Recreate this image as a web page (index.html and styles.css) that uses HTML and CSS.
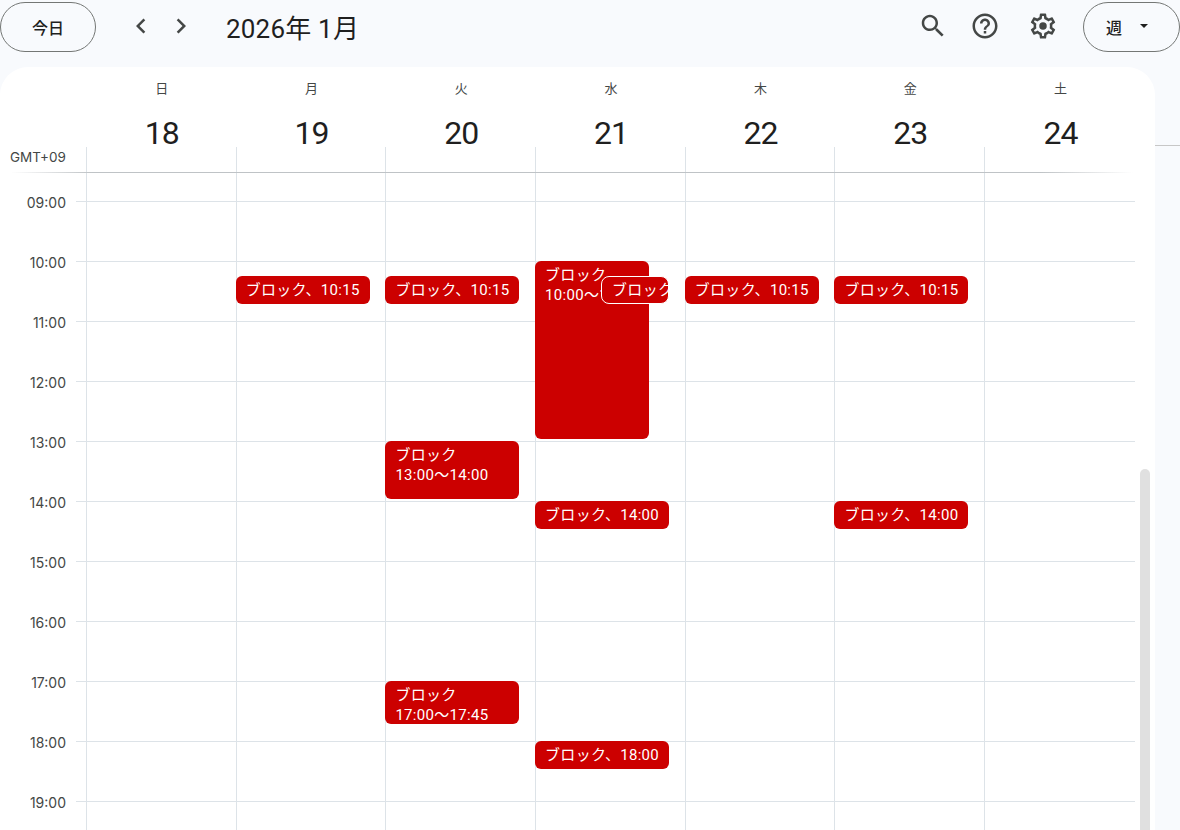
FILE: index.html
```html
<!DOCTYPE html>
<html lang="ja">
<head>
    <meta charset="UTF-8">
    <title>カレンダー</title>
    <link rel="stylesheet" href="styles.css">
</head>
<body>
    <!-- Top bar -->
    <div class="topbar">
        <button class="pill today-btn">今日</button>
        <button class="icon-btn nav-prev">
            <svg viewBox="0 0 24 24"><path d="M15.41 7.41L14 6l-6 6 6 6 1.41-1.41L10.83 12z"/></svg>
        </button>
        <button class="icon-btn nav-next">
            <svg viewBox="0 0 24 24"><path d="M10 6L8.59 7.41 13.17 12l-4.58 4.59L10 18l6-6z"/></svg>
        </button>
        <div class="title">2026年 1月</div>
        <div class="spacer"></div>
        <button class="icon-btn search-btn">
            <svg viewBox="0 0 24 24"><path d="M15.5 14h-.79l-.28-.27C15.41 12.59 16 11.11 16 9.5 16 5.91 13.09 3 9.5 3S3 5.91 3 9.5 5.91 16 9.5 16c1.61 0 3.09-.59 4.23-1.57l.27.28v.79l5 4.99L20.49 19l-4.99-5zm-6 0C7.01 14 5 11.99 5 9.5S7.01 5 9.5 5 14 7.01 14 9.5 11.99 14 9.5 14z"/></svg>
        </button>
        <button class="icon-btn help-btn">
            <svg viewBox="0 0 24 24"><path d="M11 18h2v-2h-2v2zm1-16C6.48 2 2 6.48 2 12s4.48 10 10 10 10-4.48 10-10S17.52 2 12 2zm0 18c-4.41 0-8-3.59-8-8s3.59-8 8-8 8 3.59 8 8-3.59 8-8 8zm0-14c-2.21 0-4 1.79-4 4h2c0-1.1.9-2 2-2s2 .9 2 2c0 2-3 1.75-3 5h2c0-2.25 3-2.5 3-5 0-2.21-1.79-4-4-4z"/></svg>
        </button>
        <button class="icon-btn gear-btn">
            <svg viewBox="0 0 24 24"><path d="M19.43 12.98c.04-.32.07-.64.07-.98 0-.34-.03-.66-.07-.98l2.11-1.65c.19-.15.24-.42.12-.64l-2-3.46c-.09-.16-.26-.25-.44-.25-.06 0-.12.01-.17.03l-2.49 1c-.52-.4-1.08-.73-1.69-.98l-.38-2.65C14.46 2.18 14.25 2 14 2h-4c-.25 0-.46.18-.49.42l-.38 2.65c-.61.25-1.17.59-1.69.98l-2.49-1c-.06-.02-.12-.03-.18-.03-.17 0-.34.09-.43.25l-2 3.46c-.13.22-.07.49.12.64l2.11 1.65c-.04.32-.07.65-.07.98 0 .33.03.66.07.98l-2.11 1.65c-.19.15-.24.42-.12.64l2 3.46c.09.16.26.25.44.25.06 0 .12-.01.17-.03l2.49-1c.52.4 1.08.73 1.69.98l.38 2.65c.03.24.24.42.49.42h4c.25 0 .46-.18.49-.42l.38-2.65c.61-.25 1.17-.59 1.69-.98l2.49 1c.06.02.12.03.18.03.17 0 .34-.09.43-.25l2-3.46c.12-.22.07-.49-.12-.64l-2.11-1.65zm-1.98-1.71c.04.31.05.52.05.73 0 .21-.02.43-.05.73l-.14 1.13.89.7 1.08.84-.7 1.21-1.27-.51-1.04-.42-.9.68c-.43.32-.84.56-1.25.73l-1.06.43-.16 1.13-.2 1.35h-1.4l-.19-1.35-.16-1.13-1.06-.43c-.43-.18-.83-.41-1.23-.71l-.91-.7-1.06.43-1.27.51-.7-1.21 1.08-.84.89-.7-.14-1.13c-.03-.31-.05-.54-.05-.74s.02-.43.05-.73l.14-1.13-.89-.7-1.08-.84.7-1.21 1.27.51 1.04.42.9-.68c.43-.32.84-.56 1.25-.73l1.06-.43.16-1.13.2-1.35h1.39l.19 1.35.16 1.13 1.06.43c.43.18.83.41 1.23.71l.91.7 1.06-.43 1.27-.51.7 1.21-1.07.85-.89.7.14 1.13z"/><circle cx="12" cy="12" r="3"/></svg>
        </button>
        <button class="pill view-btn">週<span class="caret"></span></button>
    </div>

    <div class="main">
        <div class="card">
            <!-- Day headers -->
            <div class="week-head">
                <div></div>
                <div class="day-head"><span class="weekday">日</span><span class="date">18</span></div>
                <div class="day-head"><span class="weekday">月</span><span class="date">19</span></div>
                <div class="day-head"><span class="weekday">火</span><span class="date">20</span></div>
                <div class="day-head"><span class="weekday">水</span><span class="date">21</span></div>
                <div class="day-head"><span class="weekday">木</span><span class="date">22</span></div>
                <div class="day-head"><span class="weekday">金</span><span class="date">23</span></div>
                <div class="day-head"><span class="weekday">土</span><span class="date">24</span></div>
            </div>

            <!-- All day row -->
            <div class="allday">
                <div class="tz">GMT+09</div>
                <div class="allday-cell"></div>
                <div class="allday-cell"></div>
                <div class="allday-cell"></div>
                <div class="allday-cell"></div>
                <div class="allday-cell"></div>
                <div class="allday-cell"></div>
                <div class="allday-cell"></div>
            </div>

            <!-- Time grid -->
            <div class="timegrid">
                <div class="hours">
                    <div class="hour">09:00</div>
                    <div class="hour">10:00</div>
                    <div class="hour">11:00</div>
                    <div class="hour">12:00</div>
                    <div class="hour">13:00</div>
                    <div class="hour">14:00</div>
                    <div class="hour">15:00</div>
                    <div class="hour">16:00</div>
                    <div class="hour">17:00</div>
                    <div class="hour">18:00</div>
                    <div class="hour">19:00</div>
                </div>

                <div class="day"></div>

                <div class="day">
                    <div class="event short" style="top:103px">ブロック、10:15</div>
                </div>

                <div class="day">
                    <div class="event short" style="top:103px">ブロック、10:15</div>
                    <div class="event" style="top:268px;height:58px">ブロック<br>13:00〜14:00</div>
                    <div class="event" style="top:508px;height:43px">ブロック<br>17:00〜17:45</div>
                </div>

                <div class="day">
                    <div class="event narrow" style="top:88px;height:178px">ブロック<br>10:00〜13:00</div>
                    <div class="event short overlap" style="top:103px">ブロック、10:15</div>
                    <div class="event short" style="top:328px">ブロック、14:00</div>
                    <div class="event short" style="top:568px">ブロック、18:00</div>
                </div>

                <div class="day">
                    <div class="event short" style="top:103px">ブロック、10:15</div>
                </div>

                <div class="day">
                    <div class="event short" style="top:103px">ブロック、10:15</div>
                    <div class="event short" style="top:328px">ブロック、14:00</div>
                </div>

                <div class="day"></div>

                <div class="scroll-track"><div class="scroll-thumb"></div></div>
            </div>
        </div>
        <div class="side"></div>
    </div>
</body>
</html>
```

FILE: styles.css
```css
* {
    box-sizing: border-box;
}

html, body {
    height: 100%;
}

body {
    margin: 0;
    background: #f8fafd;
    color: #1f1f1f;
    font-family: Roboto, "Noto Sans CJK JP", sans-serif;
    overflow: hidden;
    display: flex;
    flex-direction: column;
}

button {
    font-family: inherit;
    color: inherit;
    background: none;
    border: none;
    padding: 0;
}

/* Top bar */
.topbar {
    display: flex;
    align-items: center;
    height: 67px;
    padding: 1px 0 14px;
    flex-shrink: 0;
}

.pill {
    height: 50px;
    border: 1px solid #747775;
    border-radius: 25px;
    font-size: 16px;
    font-weight: 500;
    display: flex;
    align-items: center;
}

.today-btn {
    width: 96px;
    justify-content: center;
}

.view-btn {
    width: 97px;
    padding-left: 22px;
}

.caret {
    width: 0;
    height: 0;
    margin-left: 18px;
    margin-top: -3px;
    border-left: 4.5px solid transparent;
    border-right: 4.5px solid transparent;
    border-top: 4.5px solid #1f1f1f;
}

.icon-btn {
    width: 30px;
    height: 30px;
    margin-top: -2px;
}

.icon-btn svg {
    display: block;
    width: 30px;
    height: 30px;
    fill: #444746;
}

.nav-prev {
    margin-left: 30px;
    margin-right: 10px;
}

.title {
    font-size: 26px;
    letter-spacing: .2px;
    margin-left: 30px;
    margin-top: -2px;
}

.spacer {
    flex: 1;
}

.help-btn {
    margin-left: 22px;
}

.gear-btn {
    margin-left: 28px;
    margin-right: 25px;
}

/* Calendar card */
.main {
    flex: 1;
    display: flex;
    min-height: 0;
}

.card {
    width: 1155px;
    background: white;
    border-radius: 28px 28px 0 0;
    overflow: hidden;
}

.side {
    flex: 1;
    height: 1px;
    margin-top: 78px;
    background: #c7c7c7;
}

.week-head, .allday, .timegrid {
    display: grid;
    grid-template-columns: 86px repeat(6, 149.7px) 150.8px 1fr;
}

.week-head {
    height: 80px;
}

.day-head {
    display: flex;
    flex-direction: column;
    align-items: center;
    padding-top: 13px;
    padding-left: 2px;
}

.weekday {
    font-size: 13px;
    line-height: 18px;
    color: #444746;
}

.date {
    font-size: 32px;
    line-height: 40px;
    letter-spacing: -1px;
    margin-top: 15px;
}

/* GMT row */
.allday {
    height: 26px;
    border-bottom: 1px solid;
    border-image: linear-gradient(to right, transparent 1%, #bfc3c6 8%, #bfc3c6 90%, transparent 98%) 1;
}

.tz {
    font-family: Inter, sans-serif;
    font-size: 13.5px;
    line-height: 20px;
    color: #444746;
    padding-left: 10px;
}

.allday-cell {
    border-left: 1px solid #dde3e8;
}

/* Hours and day columns */
.timegrid {
    height: 657px;
    overflow: hidden;
}

.hours {
    padding-top: 20px;
    background-image: linear-gradient(to bottom, transparent 59px, #dde3e8 59px);
    background-size: 10px 60px;
    background-position: right -31px;
    background-repeat: repeat-y;
}

.hour {
    height: 60px;
    line-height: 20px;
    font-family: Inter, sans-serif;
    font-size: 14px;
    color: #444746;
    text-align: right;
    padding-right: 20px;
}

.day {
    position: relative;
    border-left: 1px solid #dde3e8;
    background-image: linear-gradient(to bottom, transparent 59px, #dde3e8 59px);
    background-size: 100% 60px;
    background-position: 0 -31px;
}

/* Events */
.event {
    position: absolute;
    left: -1px;
    width: 134px;
    padding: 4px 0 0 10px;
    background: #cc0000;
    color: white;
    font-size: 15px;
    letter-spacing: .3px;
    line-height: 20px;
    border-radius: 6px;
    white-space: nowrap;
    overflow: hidden;
}

.short {
    height: 28px;
}

.narrow {
    width: 114px;
}

.overlap {
    left: 65px;
    width: 68px;
    border: 1px solid white;
    border-radius: 8px;
    padding-top: 3px;
}

/* Scrollbar */
.scroll-track {
    padding: 296px 0 0 5px;
}

.scroll-thumb {
    width: 10px;
    height: 400px;
    background: #e0e0e0;
    border-radius: 5px 5px 0 0;
}
```
